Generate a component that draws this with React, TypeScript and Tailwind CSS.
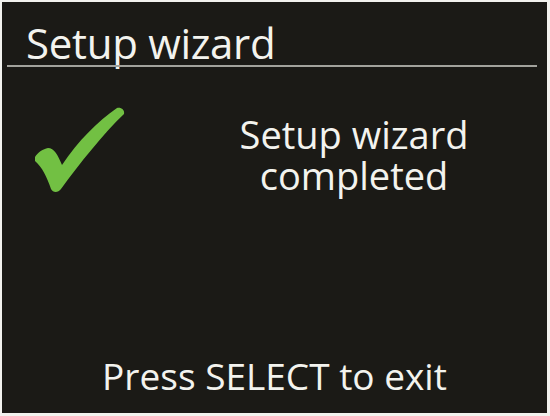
export default function App() {
  return (
    <div className="w-[550px] h-[416px] bg-[#f2f2ee] pt-[2px] pl-[2px] pr-[3px] pb-[3px] font-['Open_Sans',sans-serif]">
      <div className="h-full w-full bg-[#1b1a16] flex flex-col text-[#f3f3ee]">
        <div className="h-[63px] pl-[24px] pt-[21px] text-[42px] leading-[40px] tracking-[-0.3px]">Setup wizard</div>
        <div className="ml-[5px] mr-[10px] h-[2px] bg-[#a2a29c]" />
        <div className="flex items-start mt-[38px]">
          <svg width="100" height="90" viewBox="0 0 100 90" className="ml-[28px] shrink-0">
            <path
              d="M5 52 C8 47 13 44 18 43 C24 43 28 50 32 60 C48 36 68 16 87 3 C91 2 95 5 94 9 C74 28 50 58 31 84 C28 88 23 88 21 84 C17 72 12 62 5 56 Z"
              fill="#72c043"
            />
          </svg>
          <div className="ml-[74px] mt-[9px] w-[300px] text-center text-[38px] leading-[41px]">
            <div>Setup wizard</div>
            <div>completed</div>
          </div>
        </div>
        <div className="mt-auto pb-[14px] text-center text-[37px] leading-[46px]">Press SELECT to exit</div>
      </div>
    </div>
  );
}
